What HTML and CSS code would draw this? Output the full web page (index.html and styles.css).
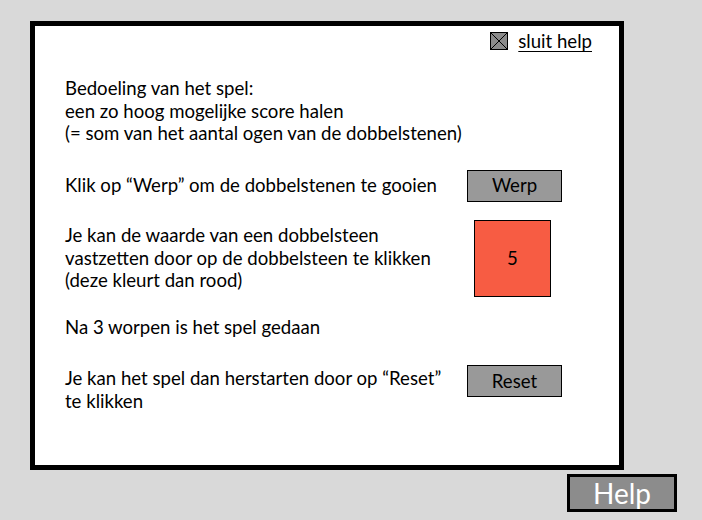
FILE: index.html
```html
<!DOCTYPE html>
<html lang="nl">
<head>
<meta charset="utf-8">
<title>Help</title>
<link rel="stylesheet" href="styles.css">
</head>
<body>
<div class="dialog">
  <div class="close-row">
    <a class="close" href="#">
      <svg class="close-icon" width="18" height="18" viewBox="0 0 18 18" aria-hidden="true">
        <rect x="0.5" y="0.5" width="17" height="17" fill="#8c8c8c" stroke="#000" stroke-width="1"/>
        <path d="M0.5 0.5 L17.5 17.5 M17.5 0.5 L0.5 17.5" stroke="#000" stroke-width="1" fill="none"/>
      </svg>
      <span class="close-label">sluit help</span>
    </a>
  </div>

  <p class="intro">Bedoeling van het spel:<br>een zo hoog mogelijke score halen<br>(= som van het aantal ogen van de dobbelstenen)</p>

  <div class="row row-werp">
    <p class="text">Klik op “Werp” om de dobbelstenen te gooien</p>
    <div class="side"><span class="btn">Werp</span></div>
  </div>

  <div class="row row-die">
    <p class="text">Je kan de waarde van een dobbelsteen<br>vastzetten door op de dobbelsteen te klikken<br>(deze kleurt dan rood)</p>
    <div class="side"><span class="die">5</span></div>
  </div>

  <p class="single">Na 3 worpen is het spel gedaan</p>

  <div class="row row-reset">
    <p class="text">Je kan het spel dan herstarten door op “Reset”<br>te klikken</p>
    <div class="side"><span class="btn">Reset</span></div>
  </div>
</div>
<div class="footer">
  <span class="help">Help</span>
</div>
</body>
</html>
```

FILE: styles.css
```css
* { box-sizing: border-box; }

html, body {
  margin: 0;
  padding: 0;
  background: #d9d9d9;
}

body {
  font-family: "Lato", "Open Sans", sans-serif;
  font-size: 18.6px;
  line-height: 22.5px;
  color: #000;
  padding-top: 21px;
}

.dialog {
  margin-left: 30px;
  width: 594px;
  height: 449px;
  border: 5px solid #000;
  background: #fff;
  padding: 4px 0 0 30px;
  display: flex;
  flex-direction: column;
}

p { margin: 0; }

.close-row {
  display: flex;
  justify-content: flex-end;
  padding-right: 27px;
  height: 22px;
}

.close {
  display: flex;
  align-items: center;
  gap: 10px;
  color: #000;
  text-decoration: none;
}

.close-icon { display: block; }

.close-label {
  text-decoration: underline;
  text-underline-offset: 3px;
}

.intro { margin-top: 25px; }

.row {
  display: flex;
  align-items: center;
}

.row .text { width: 402px; }

.side {
  width: 95px;
  display: flex;
  justify-content: center;
}

.row-werp { margin-top: 25px; }
.row-die { margin-top: 18px; }
.single { margin-top: 19px; }
.row-reset { margin-top: 27px; align-items: flex-start; }
.row-reset .text { margin-top: 2px; }

.btn {
  display: flex;
  align-items: center;
  justify-content: center;
  width: 95px;
  height: 32px;
  background: #999999;
  border: 1px solid #000;
}

.die {
  display: flex;
  align-items: center;
  justify-content: center;
  width: 77px;
  height: 77px;
  margin-left: -4px;
  background: #f75c43;
  border: 1px solid #000;
}

.footer {
  width: 677px;
  margin-top: 4px;
  display: flex;
  justify-content: flex-end;
}

.help {
  display: flex;
  align-items: center;
  justify-content: center;
  width: 110px;
  height: 38px;
  background: #8c8c8c;
  border: 3px solid #000;
  color: #fff;
  font-size: 28px;
}
```
